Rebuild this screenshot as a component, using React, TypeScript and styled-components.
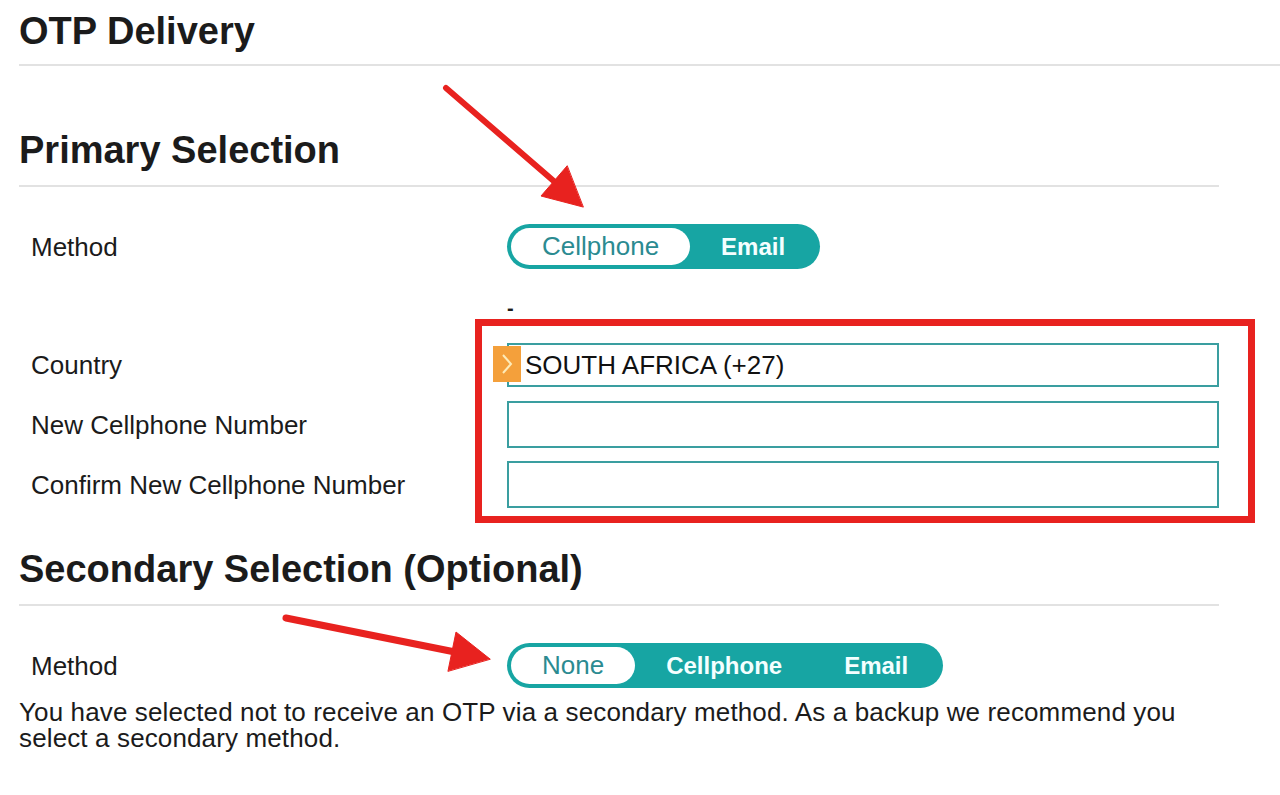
import React, { FC } from "react";
import styled, { createGlobalStyle } from "styled-components";

const Colors = {
  teal: "#17a5a3",
  tealText: "#2b8b91",
  inputBorder: "#3a9ea0",
  rule: "#e2e2e2",
  text: "#1b1b1b",
  red: "#e8221f",
  orange: "#f4a03b",
};

const GlobalStyle = createGlobalStyle`
  body {
    margin: 0;
    background: #fff;
    font-family: "Liberation Sans", Arial, Helvetica, sans-serif;
    color: ${Colors.text};
  }
`;

const Page = styled.div`
  position: relative;
  min-height: 795px;
  padding-left: 19px;
  overflow: hidden;
`;

const Title = styled.h1`
  margin: 0;
  padding: 9px 0 11px;
  font-size: 38px;
  line-height: 44px;
  font-weight: bold;
  border-bottom: 2px solid ${Colors.rule};
`;

const Section = styled.section`
  width: 1200px;
`;

const SectionTitle = styled.h2<{ $top: number }>`
  margin: ${(p) => p.$top}px 0 0;
  padding-bottom: 13px;
  font-size: 38px;
  line-height: 44px;
  font-weight: bold;
  border-bottom: 2px solid ${Colors.rule};
`;

const Row = styled.div<{ $top: number }>`
  display: grid;
  grid-template-columns: 476px 712px;
  align-items: center;
  padding-left: 12px;
  margin-top: ${(p) => p.$top}px;
`;

const Label = styled.span`
  font-size: 26px;
  line-height: 30px;
`;

const Dash = styled.span`
  grid-column: 2;
  font-size: 20px;
  font-weight: bold;
  line-height: 30px;
`;

const Toggle = styled.div`
  display: inline-flex;
  justify-self: start;
  height: 45px;
  box-sizing: border-box;
  padding: 4px;
  border-radius: 23px;
  background: ${Colors.teal};
`;

const Segment = styled.span<{ $active?: boolean }>`
  display: flex;
  align-items: center;
  padding: 0 31px;
  border-radius: 19px;
  font-size: ${(p) => (p.$active ? 26 : 24)}px;
  font-weight: ${(p) => (p.$active ? "normal" : "bold")};
  color: ${(p) => (p.$active ? Colors.tealText : "#f4ffff")};
  background: ${(p) => (p.$active ? "#fff" : "transparent")};
`;

const InputBox = styled.div<{ $height: number }>`
  position: relative;
  display: flex;
  align-items: center;
  height: ${(p) => p.$height}px;
  box-sizing: border-box;
  padding-left: 16px;
  border: 2px solid ${Colors.inputBorder};
  font-size: 26px;
  color: #111;
`;

const Chevron = styled.span`
  position: absolute;
  left: -16px;
  top: 1px;
  width: 28px;
  height: 36px;
  background: ${Colors.orange};
  display: flex;
  align-items: center;
  justify-content: center;
`;

const Note = styled.p`
  margin: 11px 0 0;
  width: 1200px;
  font-size: 26px;
  line-height: 26px;
  letter-spacing: 0.13px;
`;

const HighlightBox = styled.div`
  position: absolute;
  left: 475px;
  top: 319px;
  width: 780px;
  height: 204px;
  box-sizing: border-box;
  border: 7px solid ${Colors.red};
  pointer-events: none;
`;

const Arrows = styled.svg`
  position: absolute;
  left: 0;
  top: 0;
  pointer-events: none;
`;

type ToggleProps = { options: string[]; active: string };

const MethodToggle: FC<ToggleProps> = ({ options, active }) => (
  <Toggle>
    {options.map((o) => (
      <Segment key={o} $active={o === active}>
        {o}
      </Segment>
    ))}
  </Toggle>
);

export default function App() {
  return (
    <Page>
      <GlobalStyle />
      <Title>OTP Delivery</Title>

      <Section>
        <SectionTitle $top={62}>Primary Selection</SectionTitle>
        <Row $top={37}>
          <Label>Method</Label>
          <MethodToggle options={["Cellphone", "Email"]} active="Cellphone" />
        </Row>
        <Row $top={24}>
          <Dash>-</Dash>
        </Row>
        <Row $top={20}>
          <Label>Country</Label>
          <InputBox $height={44}>
            <Chevron>
              <svg width="14" height="24" viewBox="0 0 14 24">
                <path d="M3 3 L11 12 L3 21" fill="none" stroke="#fdebb8" strokeWidth="2" />
              </svg>
            </Chevron>
            SOUTH AFRICA (+27)
          </InputBox>
        </Row>
        <Row $top={14}>
          <Label>New Cellphone Number</Label>
          <InputBox $height={47} />
        </Row>
        <Row $top={13}>
          <Label>Confirm New Cellphone Number</Label>
          <InputBox $height={47} />
        </Row>
      </Section>

      <Section>
        <SectionTitle $top={39}>Secondary Selection (Optional)</SectionTitle>
        <Row $top={37}>
          <Label>Method</Label>
          <MethodToggle options={["None", "Cellphone", "Email"]} active="None" />
        </Row>
        <Note>
          You have selected not to receive an OTP via a secondary method. As a backup we recommend you
          select a secondary method.
        </Note>
      </Section>

      <HighlightBox />
      <Arrows width="1280" height="795" viewBox="0 0 1280 795">
        <g fill={Colors.red} stroke={Colors.red} strokeLinecap="round">
          <line x1="446" y1="88" x2="556" y2="183" strokeWidth="6" />
          <polygon points="583,207 541,196 567,166" strokeWidth="1" />
          <line x1="286" y1="618" x2="455" y2="652" strokeWidth="7" />
          <polygon points="490,659 456,632 448,671" strokeWidth="1" />
        </g>
      </Arrows>
    </Page>
  );
}
